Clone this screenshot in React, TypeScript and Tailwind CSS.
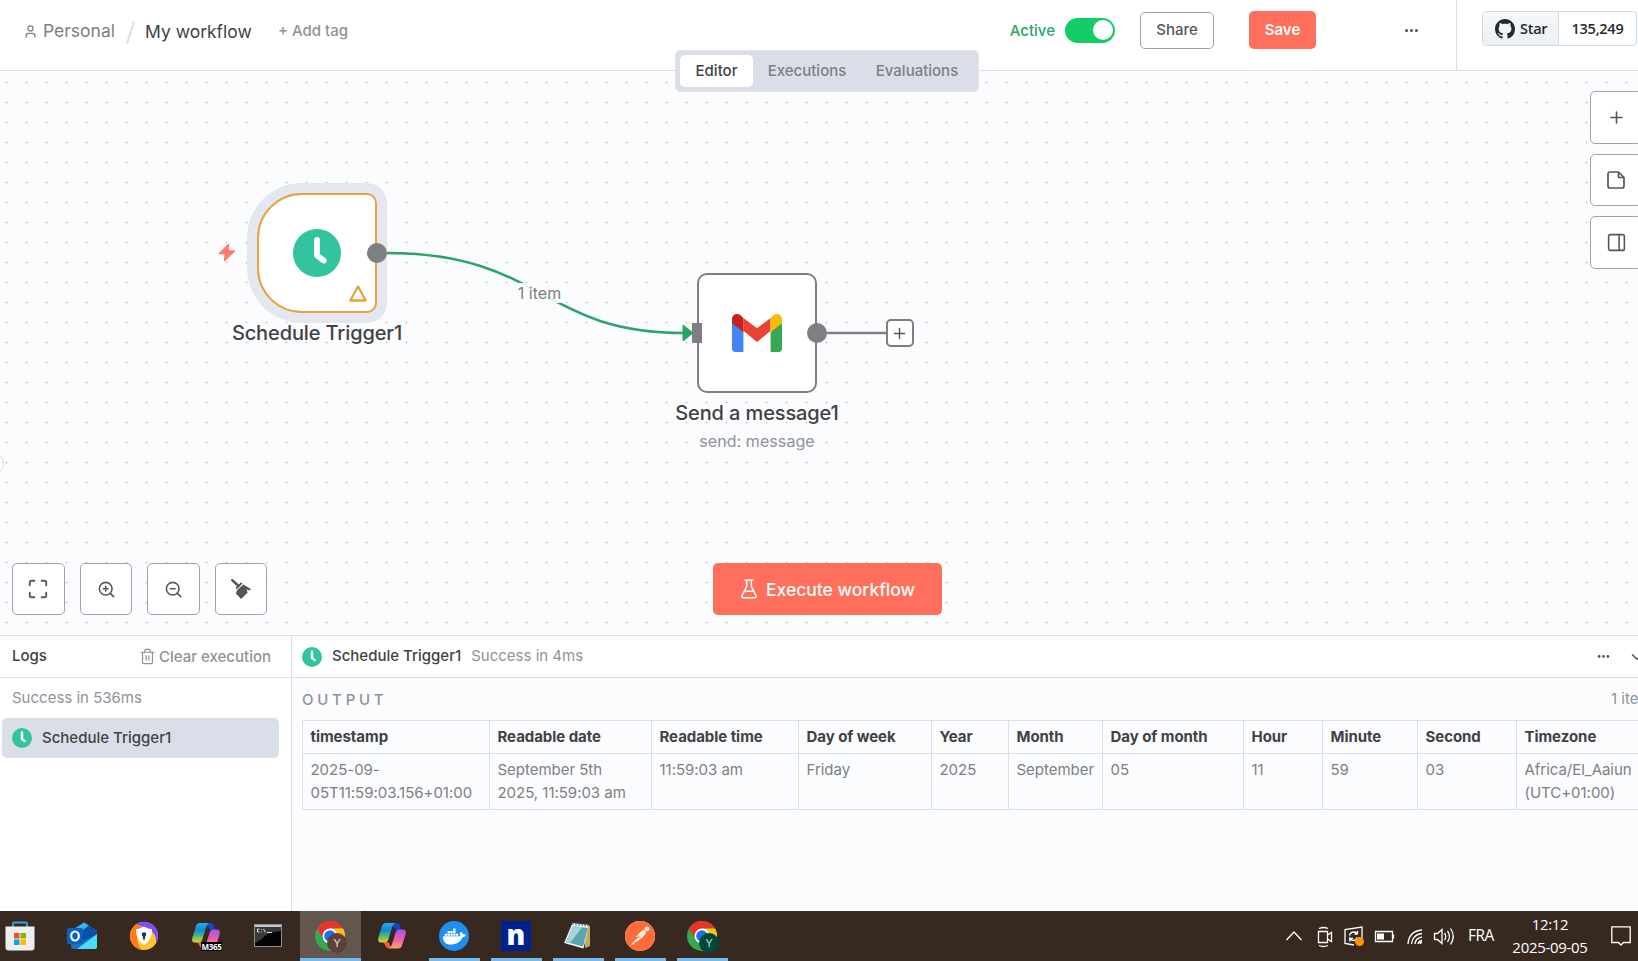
import type { ReactNode } from "react";
import { Ellipsis, User, Plus, Maximize, ZoomIn, ZoomOut, Trash2, ChevronDown, PanelRight } from "lucide-react";
import { FaDocker } from "react-icons/fa";
import { SiPostman } from "react-icons/si";

function GithubMark() {
  return (
    <svg width="20" height="20" viewBox="0 0 16 16" fill="currentColor" className="shrink-0">
      <path d="M8 0C3.58 0 0 3.58 0 8c0 3.54 2.29 6.53 5.47 7.59.4.07.55-.17.55-.38 0-.19-.01-.82-.01-1.490-2.010.37-2.530-.49-2.690-.94-.09-.23-.48-.94-.82-1.130-.28-.15-.68-.52-.01-.53.63-.01 1.080.58 1.230.82.72 1.210 1.870.87 2.330.66.07-.52.28-.87.51-1.070-1.780-.2-3.640-.89-3.640-3.950 0-.87.31-1.590.82-2.150-.08-.2-.36-1.020.08-2.120 0 0 .67-.21 2.200.82.64-.18 1.320-.27 2-.27s1.360.09 2 .27c1.530-1.040 2.200-.82 2.200-.82.44 1.100.16 1.920.08 2.120.51.56.82 1.270.82 2.150 0 3.070-1.870 3.750-3.650 3.950.29.25.54.73.54 1.480 0 1.070-.01 1.930-.01 2.200 0 .21.15.46.55.38A8.010 8.010 0 0 0 16 8c0-4.420-3.580-8-8-8z" />
    </svg>
  );
}

function Clock({ size }: { size: number }) {
  return (
    <svg width={size} height={size} viewBox="0 0 48 48" className="shrink-0">
      <circle cx="24" cy="24" r="24" fill="#31c49f" />
      <path d="M24 10.800v15.700l6.700 5" fill="none" stroke="#fff" strokeWidth="5.800" strokeLinecap="round" strokeLinejoin="round" />
    </svg>
  );
}

function Header() {
  return (
    <header className="relative z-10 flex h-[71px] shrink-0 border-b border-[#dadee9] bg-white">
      <div className="flex h-[62px] flex-1 items-center pl-[23px]">
        <User size={15} strokeWidth={2} className="mt-[1px] text-[#7d7f84]" />
        <span className="ml-[5px] w-[72px] text-[17.5px] text-[#7d7f84]">Personal</span>
        <svg width="9" height="23" viewBox="0 0 9 23" className="ml-[11px] mt-[2px]">
          <path d="M1 22.500L8 .5" stroke="#dadee9" strokeWidth="2" />
        </svg>
        <span className="ml-[10px] w-[107px] pt-[2px] text-[17.5px] text-[#414244]">My workflow</span>
        <span className="ml-[26px] text-[15px] font-medium text-[#909298]">+ Add tag</span>
      </div>
      <div className="flex h-[60px] items-center">
        <span className="pt-[2px] text-[15px] font-medium text-[#29a568]">Active</span>
        <span className="ml-[10px] mr-[25px] flex h-[25px] w-[50px] items-center justify-end rounded-full bg-[#13ce66] pr-[2px]">
          <span className="h-5 w-5 rounded-full bg-white" />
        </span>
        <button className="h-[37px] w-[74px] rounded-[5px] border border-[#9fa3b1] pt-[1px] text-[15px] font-medium text-[#555657]">Share</button>
        <button className="ml-[35px] h-[38px] w-[67px] rounded-[5px] bg-[#ff6f5c] pt-[1px] text-[15px] font-semibold text-white">Save</button>
        <Ellipsis size={17} strokeWidth={2.500} className="ml-[87px] mr-[36px] text-[#555657]" />
      </div>
      <div className="w-[182px] border-l border-[#dadee9] pl-[25px] pt-[11px]">
        <div className="flex h-[35px] w-[155px] overflow-hidden rounded-[4px] border border-[#d1d9e0] font-['Open_Sans',sans-serif] text-[14.500px] font-semibold tracking-[-0.250px] text-[#25292e]">
          <div className="flex w-[76px] items-center border-r border-[#d1d9e0] bg-linear-to-b from-[#f6f8fa] to-[#ebf0f4] pl-3">
            <GithubMark />
            <span className="ml-[5px] pt-[1px]">Star</span>
          </div>
          <div className="flex flex-1 items-center justify-center pt-[1px]">135,249</div>
        </div>
      </div>
      <nav className="absolute left-[675px] top-[50px] flex h-[42px] w-[304px] rounded-[5px] border border-[#e2e5ee] bg-[#dadee9] p-[4px] text-[15px] font-medium text-[#7d7f84]">
        <span className="flex w-[73px] items-center justify-center rounded-[5px] bg-white pt-[1px] text-[#414244]">Editor</span>
        <span className="flex w-[108px] items-center justify-center pt-[1px]">Executions</span>
        <span className="flex w-[112px] items-center justify-center pt-[1px]">Evaluations</span>
      </nav>
    </header>
  );
}

function SquareButton({ children, className = "h-[52px] w-[53px]" }: { children: ReactNode; className?: string }) {
  return (
    <button className={`flex items-center justify-center rounded-[5px] border border-[#9fa3b1] bg-white text-[#555657] ${className}`}>
      {children}
    </button>
  );
}

function Gmail() {
  return (
    <svg width="50" height="38" viewBox="0 0 50 38" className="-mt-[1px]">
      <path d="M0 8l11.400 8.500V38H3.400A3.400 3.400 0 0 1 0 34.600z" fill="#4285f4" />
      <path d="M50 8l-11.400 8.500V38h8A3.400 3.400 0 0 0 50 34.600z" fill="#34a853" />
      <path d="M11.400 16.800V4L25 14.200 38.600 4v12.800L25 28z" fill="#ea4335" />
      <path d="M0 5.100V9.200l11.400 9V4L8.200 1.100C4.800-1.400 0 .9 0 5.100z" fill="#c5221f" />
      <path d="M50 5.100V9.200l-11.400 9V4l3.200-2.900C45.200-1.400 50 .9 50 5.100z" fill="#fbbc04" />
    </svg>
  );
}

function Canvas() {
  return (
    <main className="relative h-[564px] shrink-0 overflow-hidden bg-[#fbfcfe]">
      <svg className="absolute inset-0 h-full w-full">
        <defs>
          <pattern id="dots" x="-4" y="1" width="20" height="20" patternUnits="userSpaceOnUse">
            <circle cx="10.500" cy="10.500" r="0.850" fill="#b4b8c2" />
          </pattern>
        </defs>
        <rect width="100%" height="100%" fill="url(#dots)" />
        <path d="M387 182C543 182 540 262 684 262" fill="none" stroke="#29a568" strokeWidth="2.500" />
        <path d="M683.500 255l8.500 7-8.500 7z" fill="#29a568" stroke="#29a568" strokeWidth="2" strokeLinejoin="round" />
        <path d="M826 262h61" stroke="#7d7f84" strokeWidth="2.500" />
      </svg>
      <div className="absolute left-[-18px] top-[382px] h-[22px] w-[22px] rounded-full border border-[#dadee9] bg-white" />

      <span className="absolute left-[515px] top-[213px] w-[49px] text-center text-[16px] leading-[19px] text-[#7d7f84]">
        <span className="bg-[#fbfcfe]/90">1 item</span>
      </span>

      <div className="absolute left-[257px] top-[122px] flex h-[120px] w-[120px] items-center justify-center rounded-l-[45px] rounded-r-[10px] border-2 border-[#e6a23d] bg-white shadow-[0_0_0_10px_#e4e7ef]">
        <Clock size={48} />
        <svg width="18" height="17" viewBox="0 0 18 17" className="absolute bottom-[9px] right-[8px]">
          <path d="M9 1.500L16.700 15.500H1.300z" fill="none" stroke="#e6a23d" strokeWidth="2.300" strokeLinejoin="round" />
        </svg>
      </div>
      <svg width="18" height="19" viewBox="0 0 18 19" className="absolute left-[218px] top-[172px]">
        <path d="M10.500 1.500L1.500 10.500H7.500L6.500 17.500L16.500 8H10z" fill="#ff7b6b" stroke="#ff7b6b" strokeWidth="1.500" strokeLinejoin="round" />
      </svg>
      <div className="absolute left-[367px] top-[172px] h-5 w-5 rounded-full bg-[#7d7f84]" />
      <div className="absolute left-[217px] top-[248px] w-[200px] text-center text-[20px] font-medium leading-[28px] tracking-[-0.120px] text-[#414244]">Schedule Trigger1</div>

      <div className="absolute left-[697px] top-[202px] flex h-[120px] w-[120px] items-center justify-center rounded-[10px] border-2 border-[#7d7f84] bg-white">
        <Gmail />
      </div>
      <div className="absolute left-[692px] top-[252px] h-5 w-[10px] bg-[#7d7f84]" />
      <div className="absolute left-[807px] top-[252px] h-5 w-5 rounded-full bg-[#7d7f84]" />
      <div className="absolute left-[885.500px] top-[248px] flex h-[28px] w-[28px] items-center justify-center rounded-[5px] border-2 border-[#7d7f84] bg-white text-[#555657]">
        <Plus size={17} strokeWidth={2} className="shrink-0" />
      </div>
      <div className="absolute left-[657px] top-[328px] w-[200px] text-center text-[20px] font-medium leading-[28px] tracking-[-0.120px] text-[#414244]">Send a message1</div>
      <div className="absolute left-[657px] top-[359px] w-[200px] text-center text-[16px] leading-[22px] tracking-[0.080px] text-[#909298]">send: message</div>

      <div className="absolute left-[1590px] top-[20px] flex flex-col gap-[10px]">
        <SquareButton className="h-[53px] w-[52px]"><Plus size={19} strokeWidth={2} /></SquareButton>
        <SquareButton className="h-[52px] w-[52px]">
          <svg width="18" height="18" viewBox="0 0 18 18" fill="none" stroke="currentColor" strokeWidth="1.700" strokeLinejoin="round">
            <path d="M11.500 1H3a2 2 0 0 0-2 2v12a2 2 0 0 0 2 2h12a2 2 0 0 0 2-2V6.500zV6.500H17" />
          </svg>
        </SquareButton>
        <SquareButton className="h-[53px] w-[52px]">
          <PanelRight size={21} strokeWidth={1.800} />
        </SquareButton>
      </div>

      <div className="absolute bottom-[20px] left-[12px] flex">
        <SquareButton className="mr-[15px] h-[52px] w-[53px]"><Maximize size={22} strokeWidth={2} className="-ml-[1px]" /></SquareButton>
        <SquareButton className="mr-[15px] h-[52px] w-[52px]"><ZoomIn size={19} strokeWidth={2} /></SquareButton>
        <SquareButton className="mr-[15px] h-[52px] w-[53px]"><ZoomOut size={19} strokeWidth={2} className="-ml-[1px]" /></SquareButton>
        <SquareButton className="h-[52px] w-[52px]">
          <svg width="20" height="20" viewBox="0 0 20 20" fill="currentColor">
            <path d="M1.200 1.200L7.500 7" stroke="currentColor" strokeWidth="2.400" strokeLinecap="round" />
            <path d="M4.500 9L10.100 3.300l1.400 1.300-5.700 5.700z" />
            <path d="M12.300 5.400l7.500 4.600-.9 1.500-3.200-.9.900 3.200L10 20 4.900 14.500l1.100-3.200z" />
          </svg>
        </SquareButton>
      </div>
      <button className="absolute bottom-[20px] left-[713px] flex h-[52px] w-[229px] items-center rounded-[5px] bg-[#ff6f5c] pl-[28px] text-[17.500px] font-medium text-white">
        <svg width="16" height="20" viewBox="0 0 16 20" fill="none" stroke="#fff" strokeWidth="1.600" strokeLinejoin="round" strokeLinecap="round">
          <path d="M4 1h8M5.700 1v6.500L1.100 16.300c-.6 1.500 0 2.500 1.500 2.500h10.800c1.500 0 2.100-1 1.500-2.500L10.300 7.500V1M3.600 12.200h8.800" />
        </svg>
        <span className="ml-[9px] pt-[2px]">Execute workflow</span>
      </button>
    </main>
  );
}

const columns = [
  { name: "timestamp", value: "2025-09-\n05T11:59:03.156+01:00", width: 187 },
  { name: "Readable date", value: "September 5th\n2025, 11:59:03 am", width: 162 },
  { name: "Readable time", value: "11:59:03 am", width: 147 },
  { name: "Day of week", value: "Friday", width: 133 },
  { name: "Year", value: "2025", width: 77 },
  { name: "Month", value: "September", width: 94 },
  { name: "Day of month", value: "05", width: 141 },
  { name: "Hour", value: "11", width: 79 },
  { name: "Minute", value: "59", width: 95 },
  { name: "Second", value: "03", width: 99 },
  { name: "Timezone", value: "Africa/El_Aaiun\n(UTC+01:00)", width: 130 },
];

function Logs() {
  return (
    <section className="flex min-h-0 flex-1 border-t border-[#dadee9]">
      <aside className="w-[292px] shrink-0 border-r border-[#dadee9] bg-white">
        <div className="flex h-[42px] items-center border-b border-[#dadee9] pl-3 pr-[20px] text-[15px] font-medium">
          <span className="flex-1 text-[#414244]">Logs</span>
          <Trash2 size={17} strokeWidth={1.700} className="mr-[3px] text-[#909298]" />
          <span className="pt-[1px] text-[#909298]">Clear execution</span>
        </div>
        <div className="flex h-[40px] items-center pl-3 text-[15px] text-[#909298]">Success in 536ms</div>
        <div className="ml-[2px] flex h-[40px] w-[277px] items-center rounded-[5px] bg-[#dadee9] pl-[10px] text-[15px] font-medium text-[#414244]">
          <Clock size={20} />
          <span className="ml-[10px]">Schedule Trigger1</span>
        </div>
      </aside>
      <div className="min-w-0 flex-1 overflow-hidden bg-[#fbfcfe]">
        <div className="flex h-[42px] items-center border-b border-[#dadee9] bg-white pl-[10px] text-[15px]">
          <Clock size={20} />
          <span className="ml-[10px] font-medium text-[#414244]">Schedule Trigger1</span>
          <span className="ml-[10px] flex-1 text-[#909298]">Success in 4ms</span>
          <Ellipsis size={15} strokeWidth={2.500} className="text-[#555657]" />
          <ChevronDown size={18} strokeWidth={2} className="-mr-[8px] ml-[17px] shrink-0 text-[#555657]" />
        </div>
        <div className="flex h-[42px] items-center pl-[10px] text-[15px] text-[#909298]">
          <span className="flex-1 pt-[3px] font-medium tracking-[3.750px]">OUTPUT</span>
          <span className="w-[27px] whitespace-nowrap">1 item</span>
        </div>
        <table className="ml-[10px] w-[1344px] table-fixed border-collapse text-left text-[15px] leading-[22.500px]">
          <colgroup>
            {columns.map((c) => <col key={c.name} style={{ width: c.width }} />)}
          </colgroup>
          <thead>
            <tr className="h-[33px]">
              {columns.map((c) => (
                <th key={c.name} className="whitespace-nowrap border border-[#dadee9] px-[7.500px] py-0 font-bold tracking-[-0.050px] text-[#414244]">{c.name}</th>
              ))}
            </tr>
          </thead>
          <tbody>
            <tr className="h-[56px]">
              {columns.map((c) => (
                <td key={c.name} className="whitespace-pre border border-[#dadee9] px-[7.500px] pb-0 pt-[5px] align-top tracking-[-0.030px] text-[#7d7f84]">{c.value}</td>
              ))}
            </tr>
          </tbody>
        </table>
      </div>
    </section>
  );
}

function StoreIcon() {
  return (
    <svg width="30" height="30" viewBox="0 0 30 30">
      <path d="M8 7V2.500Q8 1.500 9 1.500h12q1 0 1 1V7" fill="none" stroke="#2ba9e0" strokeWidth="1.800" />
      <path d="M.5 5.500h29v21a3 3 0 0 1-3 3h-23a3 3 0 0 1-3-3z" fill="#eeeeee" />
      <path d="M9 12h5.500v5.500H9z" fill="#f25022" /><path d="M15.500 12H21v5.500h-5.500z" fill="#7fba00" />
      <path d="M9 18.500h5.500V24H9z" fill="#00a4ef" /><path d="M15.500 18.500H21V24h-5.500z" fill="#ffb900" />
    </svg>
  );
}

function OutlookIcon() {
  return (
    <svg width="30" height="30" viewBox="0 0 30 30">
      <path d="M4 10L17 1.500 30 10v15.500a2.500 2.500 0 0 1-2.500 2.500H7a3 3 0 0 1-3-3z" fill="#1a73c8" />
      <path d="M4 10L17 1.500l5 3L8 14z" fill="#35b4ee" />
      <path d="M22 4.500l8 5.500v4L15 20 11 14z" fill="#0b4fa8" />
      <path d="M30 13v12.500a2.500 2.500 0 0 1-2.500 2.500H10z" fill="#4adcf8" />
      <rect y="7" width="16" height="16" rx="2" fill="#0a62bd" />
      <ellipse cx="8" cy="15" rx="3.800" ry="4.500" fill="none" stroke="#fff" strokeWidth="2.200" />
    </svg>
  );
}

function ShieldBrowserIcon() {
  return (
    <svg width="30" height="30" viewBox="0 0 30 30">
      <circle cx="15" cy="15" r="14" fill="#ffc52e" />
      <path d="M7 3.500A14 14 0 0 1 29 15q0 4-2 7 1-10-8-14Q13 5 7 3.500z" fill="#7c4dff" />
      <path d="M7 3.500A14 14 0 0 0 13 29q-5-5-5-12 0-7 5-11z" fill="#ff7a1a" />
      <path d="M15 5.500q4 2.500 8 2.800.5 10-8 16-8.500-6-8-16 4-.3 8-2.800z" fill="#fff" />
      <circle cx="15" cy="13.500" r="2.200" fill="#29304d" /><path d="M14.200 14h1.600l.5 4.500h-2.600z" fill="#29304d" />
    </svg>
  );
}

function CopilotIcon({ badge = false }: { badge?: boolean }) {
  const id = badge ? "m365" : "copilot";
  return (
    <div className="relative h-[30px] w-[30px]">
      <svg width="30" height="30" viewBox="0 0 30 30">
        <defs>
          <linearGradient id={`${id}-a`} x1="0" y1="0" x2="0" y2="1">
            <stop offset="0" stopColor="#1bb2f2" /><stop offset=".35" stopColor="#1684d8" /><stop offset=".65" stopColor="#43bb7c" /><stop offset="1" stopColor="#f6cd1c" />
          </linearGradient>
          <linearGradient id={`${id}-b`} x1="0" y1="0" x2="0" y2="1">
            <stop offset="0" stopColor="#9b58ef" /><stop offset=".5" stopColor="#ee5ca7" /><stop offset="1" stopColor="#ffa269" />
          </linearGradient>
        </defs>
        <path d="M14 2h5.500q2.500 0 3.500 3l1 4h-5z" fill="#1746c9" />
        <path d="M6.500 21L12 21.500 14 27q-4 1.500-5.500-2z" fill="#f4632f" />
        <path d="M9 2h9q-2 1-3 4.500L11.500 18q-1 3.500-4 3.500H4Q.3 21.500 1.300 17L5 5Q6 2 9 2z" fill={`url(#${id}-a)`} />
        <path d="M21 27.500h-9q2-1 3-4.500L18.500 12q1-3.500 4-3.500H26q3.700 0 2.700 4.500L25 24.500q-1 3-4 3z" fill={`url(#${id}-b)`} />
      </svg>
      {badge && <span className="absolute bottom-0 left-[10px] h-[9px] w-[21px] rounded-[1px] bg-black text-center font-['Open_Sans',sans-serif] text-[8px] font-bold leading-[9px] tracking-[-0.300px] text-white">M365</span>}
    </div>
  );
}

function TerminalIcon() {
  return (
    <svg width="28" height="23" viewBox="0 0 28 23" className="-ml-[1px] -mt-[2px]">
      <rect x=".5" y=".5" width="27" height="22" fill="#050505" stroke="#8e8e8e" />
      <path d="M1 1h26v2H1z" fill="#c5cbd3" />
      <path d="M1 3h26v4Q12 8 8 15l-7 4z" fill="#393939" />
      <path d="M5.500 5H3.500v3h2M7.500 5.200v.8M7.500 7.500v.8M9.500 5l2 3.500M13 8.500h5" stroke="#ddd" fill="none" strokeWidth="1" />
    </svg>
  );
}

function ChromeIcon({ badgeClass, textClass }: { badgeClass: string; textClass: string }) {
  return (
    <div className="relative h-[30px] w-[30px]">
      <svg width="30" height="30" viewBox="0 0 30 30">
        <circle cx="15" cy="15" r="15" fill="#34a853" />
        <path d="M2 7.500A15 15 0 0 1 28 7.500H15L8.500 18.500z" fill="#e8352b" />
        <path d="M28 7.500A15 15 0 0 1 15 30l6.500-11.500L15 7.500z" fill="#fbc116" />
        <circle cx="15" cy="15" r="7.500" fill="#fff" /><circle cx="15" cy="15" r="5.800" fill="#1a73e8" />
      </svg>
      <span className={`absolute left-[12px] top-[12px] flex h-[20px] w-[20px] items-center justify-center rounded-full text-[11px] font-medium ${badgeClass} ${textClass}`}>Y</span>
    </div>
  );
}

function NotepadIcon() {
  return (
    <svg width="30" height="30" viewBox="0 0 30 30">
      <path d="M22 4l5 1v20l-5 2z" fill="#c8a65a" />
      <path d="M9.500 2L26 4l-5.500 23.500L1 22z" fill="#edf4f4" />
      <path d="M10 5l15 2-5 18.500L3 21z" fill="#5aa5b4" /><path d="M10 5l9 1.200L7 22 3 21z" fill="#a7d3db" />
      <path d="M10 1v3M13 1.300v3M16 1.600v3M19 2v3M22 2.300v3M25 2.600v3" stroke="#555" strokeWidth="1" />
    </svg>
  );
}

const tasks: { icon: ReactNode; running?: boolean; active?: boolean }[] = [
  { icon: <StoreIcon /> },
  { icon: <OutlookIcon /> },
  { icon: <ShieldBrowserIcon /> },
  { icon: <CopilotIcon badge /> },
  { icon: <TerminalIcon /> },
  { icon: <ChromeIcon badgeClass="bg-[#5d4037]" textClass="text-[#d7ccc8]" />, active: true },
  { icon: <CopilotIcon /> },
  { icon: <span className="flex h-[30px] w-[30px] items-center justify-center rounded-full bg-[#1d8fee]"><FaDocker size={23} color="#fff" /></span>, running: true },
  { icon: <span className="flex h-[30px] w-[30px] items-center justify-center bg-[#00228f] pb-[4px] font-['Open_Sans',sans-serif] text-[28px] font-extrabold leading-[26px] text-white">n</span>, running: true },
  { icon: <NotepadIcon />, running: true },
  { icon: <span className="flex h-[30px] w-[30px] items-center justify-center rounded-full bg-white"><SiPostman size={30} color="#ff6c37" /></span>, running: true },
  { icon: <ChromeIcon badgeClass="bg-[#00483c]" textClass="text-[#9fc9be]" />, running: true },
];

function Taskbar() {
  return (
    <footer className="flex h-[50px] shrink-0 overflow-hidden bg-[#37291f] text-white">
      <div className="-ml-[11px] flex">
        {tasks.map((t, i) => (
          <div key={i} className="relative flex h-[50px] w-[62px] items-center justify-center">
            {t.active && <span className="absolute inset-y-0 left-[1px] right-0 border-b-[3px] border-[#76b9ed] bg-[#62564f]" />}
            {t.icon}
            {t.running && <span className="absolute bottom-0 left-[6px] h-[3px] w-[51px] bg-[#76b9ed]" />}
          </div>
        ))}
      </div>
      <svg width="174" height="50" viewBox="1284 0 174 50" className="ml-auto shrink-0" fill="none" stroke="#fff" strokeWidth="1.300">
        <path d="M1286.500 29l7.500-8 7.500 8" />
        <path d="M1318.500 20.500h9v11h-9zM1327.500 24l4-2.500v9l-4-2.500M1319 17.500q4.500-2 9 0M1319 34.500q4.500 2 9 0" />
        <path d="M1362 27V16l-17 2.500v14l9 1.500" />
        <path d="M1349.500 24.500q1-3.500 4.500-3.500 2.500 0 3.500 2v-3M1357.500 23h-3M1357 26.500q-1 3-4 3-2 0-3.200-2v3M1350 27.500h3" />
        <circle cx="1359.500" cy="30.500" r="4.500" fill="#ff9800" stroke="none" />
        <path d="M1375.500 20.500h17v10h-17zM1393.500 23.500v4" /><path d="M1377 22.500h7v6h-7z" fill="#fff" stroke="none" />
        <path d="M1408 33q1-13 14-14M1411.500 33q1-9.500 10.500-10.500M1415 33q.5-6 7-7M1418 33q.5-3 4-3.500" />
        <circle cx="1420.500" cy="31.500" r="1.400" fill="#fff" stroke="none" />
        <path d="M1434.500 22.500h3l4.500-4v14l-4.500-4h-3zM1444.500 22q2.500 3.500 0 7M1447.500 20q4 5.500 0 11M1450.500 17.500q5.500 8 0 16" />
      </svg>
      <span className="ml-[10px] w-[44px] self-center font-['Open_Sans',sans-serif] text-[15.500px] tracking-[-0.500px]">FRA</span>
      <div className="w-[76px] whitespace-nowrap pt-[2px] text-center font-['Open_Sans',sans-serif] text-[15px] leading-[23px] tracking-[-0.300px]">
        <div>12:12</div>
        <div>2025-09-05</div>
      </div>
      <svg width="20" height="20" viewBox="0 0 20 20" fill="none" stroke="#fff" strokeWidth="1.300" className="ml-[23px] mr-[7px] mt-[15px] shrink-0">
        <path d="M.8.8h18.400v15.700h-6.700L10 19l-2.500-2.500H.8z" />
      </svg>
    </footer>
  );
}

export default function App() {
  return (
    <div className="flex h-[961px] w-[1638px] flex-col overflow-hidden bg-white font-['Inter',sans-serif]">
      <Header />
      <Canvas />
      <Logs />
      <Taskbar />
    </div>
  );
}
